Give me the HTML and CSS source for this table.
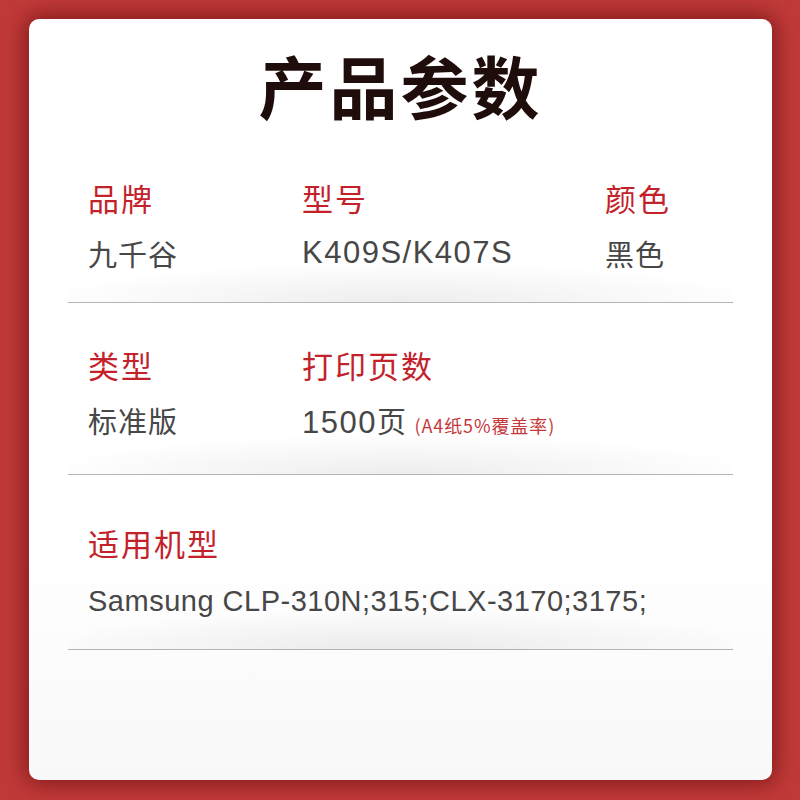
FILE: index.html
```html
<!DOCTYPE html>
<html lang="zh-CN">

<head>
    <meta charset="utf-8" />
    <title>产品参数</title>
    <link rel="stylesheet" href="styles.css">
</head>

<body>
    <div class="card">
        <h1 class="title">产品参数</h1>

        <div class="row row-one">
            <div class="cell">
                <div class="label">品牌</div>
                <div class="value">九千谷</div>
            </div>
            <div class="cell">
                <div class="label">型号</div>
                <div class="value latin">K409S/K407S</div>
            </div>
            <div class="cell">
                <div class="label">颜色</div>
                <div class="value">黑色</div>
            </div>
        </div>

        <div class="row row-two">
            <div class="cell">
                <div class="label">类型</div>
                <div class="value">标准版</div>
            </div>
            <div class="cell wide">
                <div class="label">打印页数</div>
                <div class="value"><span class="latin">1500</span>页 <span class="note">(A4纸5%覆盖率)</span></div>
            </div>
        </div>

        <div class="row row-three">
            <div class="cell">
                <div class="label">适用机型</div>
                <div class="value latin models">Samsung CLP-310N;315;CLX-3170;3175;</div>
            </div>
        </div>
    </div>
</body>

</html>
```

FILE: styles.css
```css
html,
body {
    height: 100%;
}

body {
    margin: 0;
    box-sizing: border-box;
    padding: 19px 28px 20px 29px;
    background-color: #c13a39;
    font-family: "Noto Sans CJK SC", "Liberation Sans", sans-serif;
}

.card {
    height: 100%;
    box-sizing: border-box;
    padding-top: 32px;
    border-radius: 10px;
    background: linear-gradient(#ffffff 70%, #f8f8f8);
    box-shadow: 0 0 22px 4px rgba(80, 0, 0, 0.55);
}

.title {
    margin: 0;
    text-align: center;
    font-size: 68px;
    line-height: 68px;
    font-weight: 700;
    letter-spacing: 3px;
    color: #1f0d0b;
}

.row {
    display: grid;
    grid-template-columns: 214px 303px 1fr;
    margin: 0 39px;
    padding-left: 20px;
    border-bottom: 1px solid #b4b4b4;
    background: radial-gradient(ellipse 55% 100% at 50% 100%, rgba(0, 0, 0, 0.07), rgba(0, 0, 0, 0)) no-repeat bottom / 100% 40px;
}

.row-one {
    margin-top: 59px;
    padding-bottom: 29px;
}

.row-two {
    padding-top: 42px;
    padding-bottom: 29px;
}

.row-three {
    grid-template-columns: 1fr;
    padding-top: 48px;
    padding-bottom: 28px;
}

.cell.wide {
    grid-column: span 2;
}

.label {
    font-size: 31px;
    line-height: 40px;
    letter-spacing: 2px;
    color: #c3222b;
}

.value {
    margin-top: 15px;
    font-size: 29px;
    line-height: 40px;
    letter-spacing: 1px;
    color: #474747;
}

.row-three .value {
    margin-top: 18px;
}

.latin {
    font-family: "Liberation Sans", "Noto Sans CJK SC", sans-serif;
    font-size: 31px;
    letter-spacing: 1.5px;
}

.models {
    font-size: 29px;
    letter-spacing: 0.5px;
}

.note {
    font-size: 18px;
    letter-spacing: 0.9px;
    color: #c5383a;
}
```
